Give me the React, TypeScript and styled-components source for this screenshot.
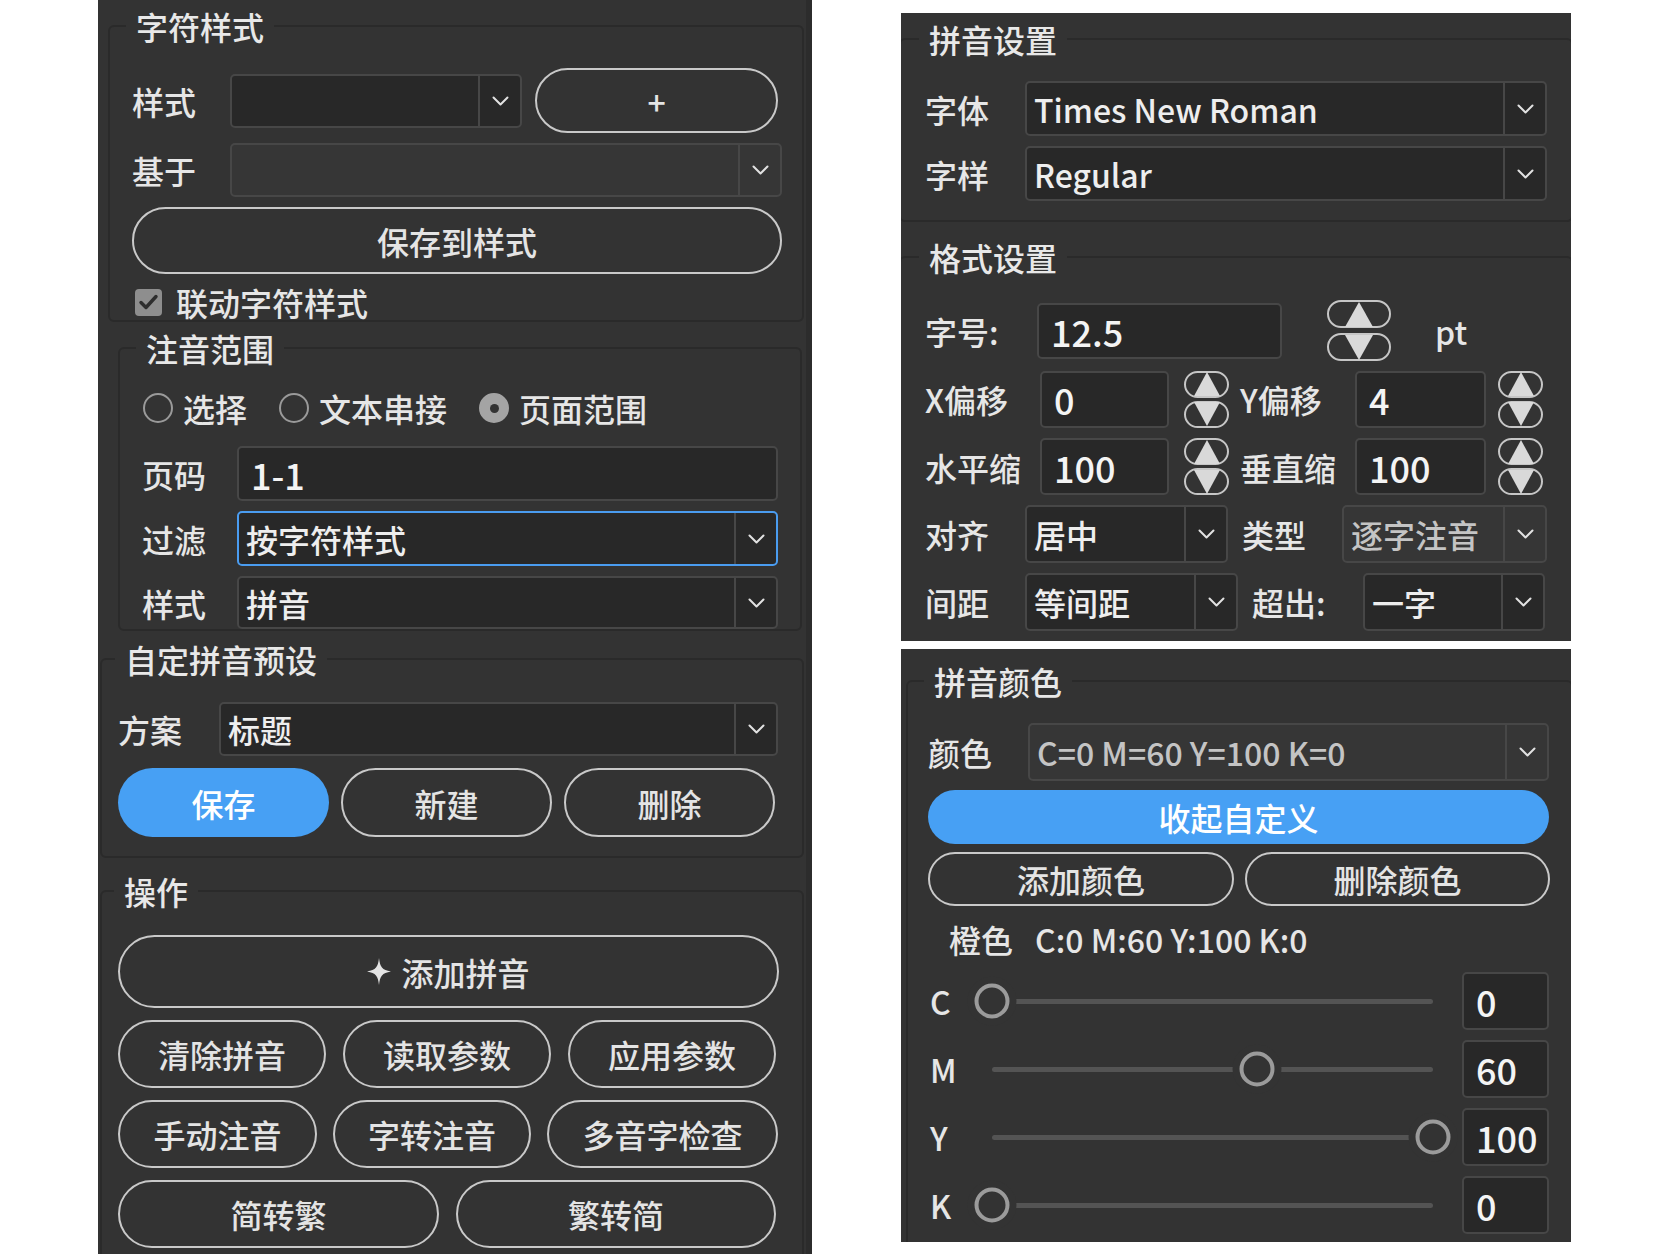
import React from 'react';
import styled, { createGlobalStyle } from 'styled-components';

const GlobalStyle = createGlobalStyle`
  * { box-sizing: border-box; }
  html, body { margin: 0; padding: 0; background: #ffffff; }
  body {
    font-family: "Noto Sans CJK SC", "Noto Sans", sans-serif;
    font-weight: 500;
    color: #e6e6e6;
  }
`;

const Page = styled.div`
  display: flex;
  align-items: flex-start;
  width: 1672px;
  height: 1254px;
  padding-left: 98px;
  gap: 89px;
  overflow: hidden;
`;

const LeftPanel = styled.div`
  width: 714px;
  height: 1254px;
  padding-top: 8px;
  background: #333333;
  border-right: 6px solid #2c2c2c;
  overflow: hidden;
`;

const RightColumn = styled.div`
  display: flex;
  flex-direction: column;
  gap: 8px;
  width: 670px;
  padding-top: 13px;
`;

const Panel = styled.div<{ $h: number }>`
  height: ${({ $h }) => $h}px;
  background: #333333;
  overflow: hidden;
`;

const Group = styled.fieldset<{ $m: string; $p: string }>`
  margin: ${({ $m }) => $m};
  padding: ${({ $p }) => $p};
  min-width: 0;
  border: 2px solid #2a2a2a;
  border-radius: 6px;
`;

const Legend = styled.legend<{ $shift: number }>`
  margin-left: ${({ $shift }) => $shift}px;
  padding: 0 10px;
  font-size: 32px;
  line-height: 36px;
  color: #e8e8e8;
`;

const Stack = styled.div<{ $gap: number }>`
  display: flex;
  flex-direction: column;
  gap: ${({ $gap }) => $gap}px;
`;

const Row = styled.div<{ $h: number; $gap?: number }>`
  display: flex;
  align-items: center;
  height: ${({ $h }) => $h}px;
  gap: ${({ $gap = 0 }) => $gap}px;
`;

const FieldLabel = styled.span<{ $w: number }>`
  flex: 0 0 ${({ $w }) => $w}px;
  font-size: 32px;
  line-height: 1;
  color: #e6e6e6;
  white-space: nowrap;
`;

const SelectBox = styled.div<{ $w?: number; $h: number; $muted?: boolean; $focus?: boolean }>`
  display: flex;
  ${({ $w }) => ($w ? `flex: 0 0 ${$w}px;` : 'flex: 1;')}
  height: ${({ $h }) => $h}px;
  border: 2px solid ${({ $focus }) => ($focus ? '#4a9cf0' : '#474747')};
  border-radius: 5px;
  background: ${({ $muted }) => ($muted ? '#363636' : '#282828')};
`;

const SelectValue = styled.span<{ $muted?: boolean }>`
  display: flex;
  align-items: center;
  flex: 1;
  min-width: 0;
  padding-left: 7px;
  font-size: 32px;
  line-height: 1;
  color: ${({ $muted }) => ($muted ? '#c4c4c4' : '#eeeeee')};
  white-space: nowrap;
  overflow: hidden;
`;

const Caret = styled.span`
  display: flex;
  align-items: center;
  justify-content: center;
  flex: 0 0 42px;
  border-left: 2px solid #474747;
`;

const TextField = styled.div<{ $w?: number; $h: number }>`
  display: flex;
  align-items: center;
  ${({ $w }) => ($w ? `flex: 0 0 ${$w}px;` : 'flex: 1;')}
  height: ${({ $h }) => $h}px;
  padding-left: 12px;
  border: 2px solid #474747;
  border-radius: 5px;
  background: #282828;
  font-size: 36px;
  line-height: 1;
  color: #f4f4f4;
`;

const PillButton = styled.button<{ $w?: number; $h: number; $primary?: boolean }>`
  display: flex;
  align-items: center;
  justify-content: center;
  gap: 10px;
  ${({ $w }) => ($w ? `flex: 0 0 ${$w}px;` : 'width: 100%;')}
  height: ${({ $h }) => $h}px;
  padding: 0;
  border: ${({ $primary }) => ($primary ? 'none' : '2.5px solid #c9c9c9')};
  border-radius: 999px;
  background: ${({ $primary }) => ($primary ? '#47a0f4' : 'transparent')};
  color: ${({ $primary }) => ($primary ? '#ffffff' : '#e4e4e4')};
  font-family: inherit;
  font-weight: inherit;
  font-size: 32px;
  line-height: 1;
  cursor: pointer;
`;

const ButtonGrid = styled.div<{ $h: number }>`
  display: grid;
  grid-template-columns: repeat(3, 211px);
  gap: 12px;
  height: ${({ $h }) => $h}px;
`;

const CheckRow = styled.label`
  display: flex;
  align-items: center;
  gap: 14px;
  height: 36px;
  padding-left: 3px;
  font-size: 32px;
  line-height: 1;
  color: #e6e6e6;
`;

const CheckBox = styled.span`
  display: flex;
  align-items: center;
  justify-content: center;
  width: 27px;
  height: 27px;
  border-radius: 4px;
  background: #8e8e8e;
`;

const RadioRow = styled.div`
  display: flex;
  align-items: center;
  gap: 32px;
  height: 36px;
  margin-bottom: 10px;
  padding-left: 1px;
`;

const RadioItem = styled.span`
  display: inline-flex;
  align-items: center;
  gap: 10px;
  font-size: 32px;
  line-height: 1;
  color: #e6e6e6;
`;

const RadioDot = styled.span<{ $on?: boolean }>`
  display: flex;
  align-items: center;
  justify-content: center;
  width: 30px;
  height: 30px;
  border-radius: 50%;
  border: 2px solid ${({ $on }) => ($on ? '#a4a4a4' : '#9a9a9a')};
  background: ${({ $on }) => ($on ? '#a4a4a4' : 'transparent')};
`;

const RadioCenter = styled.span`
  width: 9px;
  height: 9px;
  border-radius: 50%;
  background: #333333;
`;

const SpinStack = styled.div<{ $w: number; $gap: number }>`
  display: flex;
  flex-direction: column;
  gap: ${({ $gap }) => $gap}px;
  flex: 0 0 ${({ $w }) => $w}px;
`;

const SpinHalf = styled.button<{ $h: number }>`
  display: flex;
  align-items: center;
  justify-content: center;
  height: ${({ $h }) => $h}px;
  padding: 0;
  border: 2.5px solid #c6c6c6;
  border-radius: 999px;
  background: transparent;
  overflow: visible;
  cursor: pointer;
`;

const Unit = styled.span`
  font-size: 32px;
  line-height: 1;
  color: #e6e6e6;
`;

const SwatchLine = styled.div`
  display: flex;
  align-items: center;
  gap: 22px;
  height: 36px;
  margin: 7px 0;
  padding-left: 21px;
  font-size: 32px;
  line-height: 1;
  color: #e6e6e6;
`;

const ChannelLabel = styled.span`
  flex: 0 0 47px;
  padding-left: 2px;
  font-size: 32px;
  line-height: 1;
  color: #e6e6e6;
`;

const SliderTrack = styled.div`
  display: flex;
  align-items: center;
  flex: 0 0 475px;
  height: 36px;
  margin-right: 12px;
  padding: 0 17px;
`;

const TrackLine = styled.div`
  position: relative;
  flex: 1;
  height: 5px;
  border-radius: 3px;
  background: #545454;
`;

const Knob = styled.span`
  position: absolute;
  top: 50%;
  width: 35px;
  height: 35px;
  border-radius: 50%;
  border: 4px solid #9b9b9b;
  background: #333333;
  box-shadow: 0 0 0 7px #333333;
  transform: translate(-50%, -50%);
`;

function ChevronIcon() {
  return (
    <svg width="17" height="10" viewBox="0 0 17 10" fill="none">
      <polyline points="1.5,1.5 8.5,8.5 15.5,1.5" stroke="#e2e2e2" strokeWidth="2" strokeLinecap="round" strokeLinejoin="round" />
    </svg>
  );
}

function CheckIcon() {
  return (
    <svg width="21" height="18" viewBox="0 0 21 18" fill="none">
      <polyline points="3,9.5 8,14.5 18,3.5" stroke="#2e2e2e" strokeWidth="3.4" strokeLinecap="round" strokeLinejoin="round" />
    </svg>
  );
}

function SparkIcon() {
  return (
    <svg width="24" height="27" viewBox="0 0 24 27">
      <path d="M12 0 C13 9 15 12 24 13.5 C15 15 13 18 12 27 C11 18 9 15 0 13.5 C9 12 11 9 12 0 Z" fill="#e4e4e4" />
    </svg>
  );
}

interface SelectProps {
  value?: string;
  width?: number;
  height?: number;
  muted?: boolean;
  focus?: boolean;
}

function Select({ value = '', width, height = 55, muted, focus }: SelectProps) {
  return (
    <SelectBox $w={width} $h={height} $muted={muted} $focus={focus}>
      <SelectValue $muted={muted}>{value}</SelectValue>
      <Caret>
        <ChevronIcon />
      </Caret>
    </SelectBox>
  );
}

// up/down pair of pill buttons with filled triangles
function Spinner({ large }: { large?: boolean }) {
  const w = large ? 64 : 45;
  const h = large ? 28 : 27;
  const tri = large ? 28 : 26;
  return (
    <SpinStack $w={w} $gap={large ? 5 : 3}>
      <SpinHalf $h={h}>
        <svg width={tri} height={h - 3} viewBox="0 0 28 26" preserveAspectRatio="none">
          <polygon points="14,0 28,26 0,26" fill="#d9d9d9" />
        </svg>
      </SpinHalf>
      <SpinHalf $h={h}>
        <svg width={tri} height={h - 3} viewBox="0 0 28 26" preserveAspectRatio="none">
          <polygon points="0,0 28,0 14,26" fill="#d9d9d9" />
        </svg>
      </SpinHalf>
    </SpinStack>
  );
}

function Slider({ name, value }: { name: string; value: number }) {
  return (
    <Row $h={58}>
      <ChannelLabel>{name}</ChannelLabel>
      <SliderTrack>
        <TrackLine>
          <Knob style={{ left: `${value}%` }} />
        </TrackLine>
      </SliderTrack>
      <TextField $w={87} $h={58}>
        {value}
      </TextField>
    </Row>
  );
}

const opRows = [
  [
    { text: '清除拼音', w: 208 },
    { text: '读取参数', w: 208 },
    { text: '应用参数', w: 208 },
  ],
  [
    { text: '手动注音', w: 199 },
    { text: '字转注音', w: 198 },
    { text: '多音字检查', w: 231 },
  ],
  [
    { text: '简转繁', w: 321 },
    { text: '繁转简', w: 320 },
  ],
];

const channels = [
  { name: 'C', value: 0 },
  { name: 'M', value: 60 },
  { name: 'Y', value: 100 },
  { name: 'K', value: 0 },
];

function StylePanel() {
  return (
    <LeftPanel>
      <Group $m="0 2px 0 10px" $p="24px 20px 0 22px">
        <Legend $shift={-6}>字符样式</Legend>
        <Stack $gap={10}>
          <Row $h={65}>
            <FieldLabel $w={98}>样式</FieldLabel>
            <Select width={292} height={54} />
            <PillButton $w={243} $h={65} style={{ marginLeft: 13 }}>
              +
            </PillButton>
          </Row>
          <Row $h={54}>
            <FieldLabel $w={98}>基于</FieldLabel>
            <Select height={54} muted />
          </Row>
          <PillButton $h={67}>保存到样式</PillButton>
          <CheckRow>
            <CheckBox>
              <CheckIcon />
            </CheckBox>
            联动字符样式
          </CheckRow>
        </Stack>
      </Group>

      <Group $m="8px 4px 0 20px" $p="24px 22px 0 22px">
        <Legend $shift={-6}>注音范围</Legend>
        <Stack $gap={10}>
          <RadioRow>
            <RadioItem>
              <RadioDot />
              选择
            </RadioItem>
            <RadioItem>
              <RadioDot />
              文本串接
            </RadioItem>
            <RadioItem>
              <RadioDot $on>
                <RadioCenter />
              </RadioDot>
              页面范围
            </RadioItem>
          </RadioRow>
          <Row $h={55}>
            <FieldLabel $w={95}>页码</FieldLabel>
            <TextField $h={55}>1-1</TextField>
          </Row>
          <Row $h={55}>
            <FieldLabel $w={95}>过滤</FieldLabel>
            <Select value="按字符样式" focus />
          </Row>
          <Row $h={53}>
            <FieldLabel $w={95}>样式</FieldLabel>
            <Select value="拼音" height={53} />
          </Row>
        </Stack>
      </Group>

      <Group $m="10px 2px 0 2px" $p="25px 24px 19px 16px">
        <Legend $shift={-3}>自定拼音预设</Legend>
        <Stack $gap={12}>
          <Row $h={54}>
            <FieldLabel $w={101}>方案</FieldLabel>
            <Select value="标题" height={54} />
          </Row>
          <ButtonGrid $h={69}>
            <PillButton $h={69} $primary>
              保存
            </PillButton>
            <PillButton $h={69}>新建</PillButton>
            <PillButton $h={69}>删除</PillButton>
          </ButtonGrid>
        </Stack>
      </Group>

      <Group $m="15px 2px 0 2px" $p="26px 23px 20px 16px">
        <Legend $shift={-4}>操作</Legend>
        <Stack $gap={12}>
          <PillButton $h={73}>
            <SparkIcon />
            添加拼音
          </PillButton>
          {opRows.map((row, i) => (
            <Row key={i} $h={68} $gap={i === 1 ? 16 : 17}>
              {row.map((b) => (
                <PillButton key={b.text} $w={b.w} $h={68}>
                  {b.text}
                </PillButton>
              ))}
            </Row>
          ))}
        </Stack>
      </Group>
    </LeftPanel>
  );
}

function SettingsPanel() {
  return (
    <Panel $h={628}>
      <Group $m="8px -2px 0 -2px" $p="24px 24px 19px 24px">
        <Legend $shift={-6}>拼音设置</Legend>
        <Stack $gap={10}>
          <Row $h={55}>
            <FieldLabel $w={100}>字体</FieldLabel>
            <Select value="Times New Roman" />
          </Row>
          <Row $h={55}>
            <FieldLabel $w={100}>字样</FieldLabel>
            <Select value="Regular" />
          </Row>
        </Stack>
      </Group>

      <Group $m="17px -2px 0 -2px" $p="25px 24px 12px 24px">
        <Legend $shift={-6}>格式设置</Legend>
        <Stack $gap={10}>
          <Row $h={61} style={{ marginBottom: -1 }}>
            <FieldLabel $w={112}>字号:</FieldLabel>
            <TextField $w={245} $h={56}>
              12.5
            </TextField>
            <span style={{ width: 45 }} />
            <Spinner large />
            <span style={{ width: 44 }} />
            <Unit>pt</Unit>
          </Row>
          <Row $h={58}>
            <FieldLabel $w={115}>X偏移</FieldLabel>
            <TextField $w={129} $h={57}>
              0
            </TextField>
            <span style={{ width: 15 }} />
            <Spinner />
            <span style={{ width: 11 }} />
            <FieldLabel $w={115}>Y偏移</FieldLabel>
            <TextField $w={131} $h={57}>
              4
            </TextField>
            <span style={{ width: 12 }} />
            <Spinner />
          </Row>
          <Row $h={57}>
            <FieldLabel $w={115}>水平缩</FieldLabel>
            <TextField $w={129} $h={57}>
              100
            </TextField>
            <span style={{ width: 15 }} />
            <Spinner />
            <span style={{ width: 11 }} />
            <FieldLabel $w={115}>垂直缩</FieldLabel>
            <TextField $w={131} $h={57}>
              100
            </TextField>
            <span style={{ width: 12 }} />
            <Spinner />
          </Row>
          <Row $h={58}>
            <FieldLabel $w={100}>对齐</FieldLabel>
            <Select value="居中" width={203} height={58} />
            <span style={{ width: 14 }} />
            <FieldLabel $w={100}>类型</FieldLabel>
            <Select value="逐字注音" width={205} height={58} muted />
          </Row>
          <Row $h={58}>
            <FieldLabel $w={100}>间距</FieldLabel>
            <Select value="等间距" width={213} height={58} />
            <span style={{ width: 14 }} />
            <FieldLabel $w={111}>超出:</FieldLabel>
            <Select value="一字" width={182} height={58} />
          </Row>
        </Stack>
      </Group>
    </Panel>
  );
}

function ColorPanel() {
  return (
    <Panel $h={593}>
      <Group $m="14px -2px 0 5px" $p="24px 22px 12px 20px">
        <Legend $shift={-4}>拼音颜色</Legend>
        <Stack $gap={8}>
          <Row $h={58} style={{ marginBottom: 1 }}>
            <FieldLabel $w={100}>颜色</FieldLabel>
            <Select value="C=0 M=60 Y=100 K=0" height={58} muted />
          </Row>
          <PillButton $h={54} $primary>
            收起自定义
          </PillButton>
          <Row $h={54} $gap={11}>
            <PillButton $w={306} $h={54}>
              添加颜色
            </PillButton>
            <PillButton $w={305} $h={54}>
              删除颜色
            </PillButton>
          </Row>
          <SwatchLine>
            <span>橙色</span>
            <span>C:0 M:60 Y:100 K:0</span>
          </SwatchLine>
          <Stack $gap={10}>
            {channels.map((c) => (
              <Slider key={c.name} name={c.name} value={c.value} />
            ))}
          </Stack>
        </Stack>
      </Group>
    </Panel>
  );
}

export default function App() {
  return (
    <>
      <GlobalStyle />
      <Page>
        <StylePanel />
        <RightColumn>
          <SettingsPanel />
          <ColorPanel />
        </RightColumn>
      </Page>
    </>
  );
}
